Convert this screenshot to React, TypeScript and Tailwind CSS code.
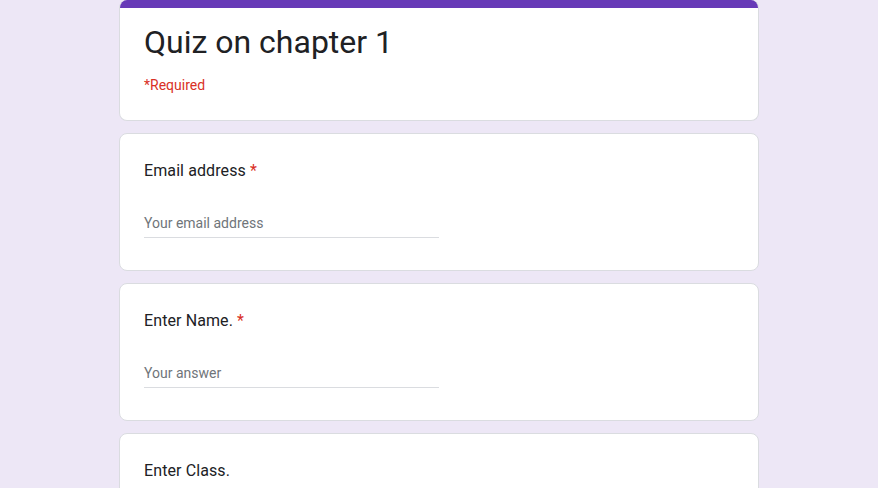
const fields = [
  { label: "Email address", placeholder: "Your email address", required: true },
  { label: "Enter Name.", placeholder: "Your answer", required: true },
  { label: "Enter Class.", placeholder: "Your answer", required: false },
];

const Question = ({ label, placeholder, required }: { label: string; placeholder: string; required: boolean }) => (
  <div className="rounded-lg border border-[#dadce0] bg-white px-6 pt-[25px] pb-[32px]">
    <div className="text-[16px] leading-6 tracking-[0.1px] text-[#202124]">
      {label}
      {required && <span className="ml-1 text-[#d93025]">*</span>}
    </div>
    <div className="mt-[30px] w-1/2 border-b border-[#dadce0] pb-[4px] text-[14px] leading-5 text-[#70757a]">
      {placeholder}
    </div>
  </div>
);

export default function App() {
  return (
    <div className="min-h-screen bg-[#ede7f6] font-['Roboto',sans-serif]">
      <div className="mx-auto flex w-[640px] flex-col gap-3">
        <div className="overflow-hidden rounded-b-lg rounded-t-lg border border-t-0 border-[#dadce0] bg-white">
          <div className="h-[8px] bg-[#673ab7]" />
          <div className="px-6 pt-[14px] pb-[25px]">
            <h1 className="text-[32px] leading-10 text-[#202124]">Quiz on chapter 1</h1>
            <p className="mt-[13px] text-[14px] leading-5 text-[#d93025]">*Required</p>
          </div>
        </div>
        {fields.map((f) => (
          <Question key={f.label} {...f} />
        ))}
      </div>
    </div>
  );
}
